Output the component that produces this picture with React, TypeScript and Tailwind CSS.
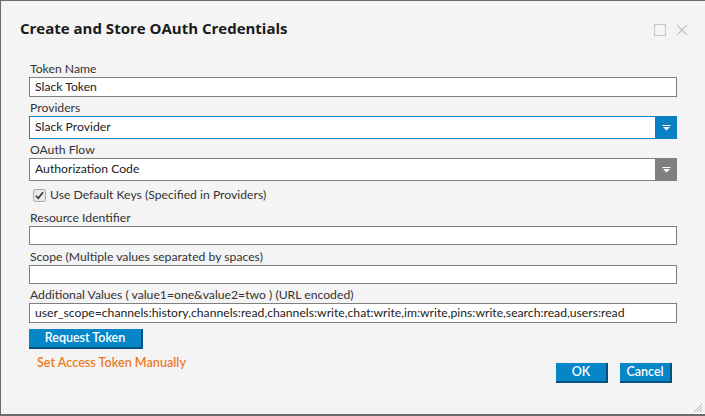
import React from 'react';

const font = { fontFamily: 'Lato, "Open Sans", sans-serif' };

const Caret = () => (
  <svg width="9" height="6" viewBox="0 0 9 6">
    <rect x="0.5" y="0" width="8" height="1" fill="#fff" />
    <polygon points="1,2 8,2 4.5,5.5" fill="#fff" />
  </svg>
);

const Field = ({ label, value, top, h = 20 }: { label: string; value?: string; top: string; h?: number }) => (
  <div className={top}>
    <div className="text-[12.2px] leading-[16px] text-[#333] pl-px">{label}</div>
    <div
      className="bg-white border border-[#808080] flex items-center px-[5px] text-[12.2px] text-[#222] whitespace-nowrap"
      style={{ height: h }}
    >
      {value}
    </div>
  </div>
);

const Select = ({ label, value, blue, top }: { label: string; value: string; blue?: boolean; top: string }) => (
  <div className={top}>
    <div className="text-[12.2px] leading-[16px] text-[#333] pl-px">{label}</div>
    <div className={`h-[23px] flex bg-white border ${blue ? 'border-[#0a84c9]' : 'border-[#808080]'}`}>
      <div className="flex-1 flex items-center px-[5px] text-[12.2px] text-[#222]">{value}</div>
      <div className={`w-[22px] -my-px -mr-px flex items-center justify-center ${blue ? 'bg-[#0a80c4]' : 'bg-[#808080]'}`}>
        <Caret />
      </div>
    </div>
  </div>
);

const Btn = ({ children, w }: { children: React.ReactNode; w: string }) => (
  <div
    className={`${w} h-[20px] flex items-center justify-center bg-[#0586c8] border-r-2 border-b-2 border-[#00527d] text-white text-[12.5px] font-semibold`}
  >
    {children}
  </div>
);

export default function App() {
  return (
    <div
      className="w-[705px] h-[416px] bg-[#f4f4f4] border-t border-l border-b-2 border-[#6b6b6b] relative overflow-hidden"
      style={font}
    >
      {/* Title bar */}
      <div className="flex items-center justify-between pl-[19px] pr-[17px] pt-[17px]">
        <h1
          className="text-[15px] leading-[20px] font-bold text-[#1a1a1a]"
          style={{ fontFamily: '"Open Sans", sans-serif' }}
        >
          Create and Store OAuth Credentials
        </h1>
        <div className="flex items-center gap-[10px] mt-[4px]">
          <svg width="12" height="12" viewBox="0 0 12 12">
            <rect x="0.5" y="0.5" width="11" height="11" fill="none" stroke="#c6c6c6" />
          </svg>
          <svg width="12" height="12" viewBox="0 0 12 12">
            <path d="M1 1 L11 11 M11 1 L1 11" stroke="#c6c6c6" strokeWidth="1.2" />
          </svg>
        </div>
      </div>

      {/* Form */}
      <div className="ml-[28px] w-[648px]">
        <Field label="Token Name" value="Slack Token" top="mt-[23px]" />
        <Select label="Providers" value="Slack Provider" blue top="mt-[3px]" />
        <Select label="OAuth Flow" value="Authorization Code" top="mt-[3px]" />

        <div className="flex items-center gap-[4px] mt-[6px] ml-[4px] h-[16px]">
          <svg width="13" height="13" viewBox="0 0 13 13">
            <rect x="0.5" y="0.5" width="12" height="12" rx="2" fill="#e8e8e8" stroke="#a8a8a8" />
            <path d="M3 6.8 L5.3 9.3 L10 3.2" fill="none" stroke="#333" strokeWidth="1.6" />
          </svg>
          <span className="text-[12.2px] text-[#333]">Use Default Keys (Specified in Providers)</span>
        </div>

        <Field label="Resource Identifier" top="mt-[7px]" h={19} />
        <Field label="Scope (Multiple values separated by spaces)" top="mt-[4px]" h={19} />
        <Field
          label="Additional Values ( value1=one&value2=two ) (URL encoded)"
          value="user_scope=channels:history,channels:read,channels:write,chat:write,im:write,pins:write,search:read,users:read"
          top="mt-[3px]"
        />

        <div className="flex items-start justify-between mt-[6px]">
          <div>
            <Btn w="w-[114px]">Request Token</Btn>
            <div className="ml-[8px] mt-[6px] text-[12.6px] leading-[16px] font-semibold text-[#ec7a23]">
              Set Access Token Manually
            </div>
          </div>
          <div className="flex gap-[12px] mt-[34px] mr-[5px]">
            <Btn w="w-[52px]">OK</Btn>
            <Btn w="w-[52px]">Cancel</Btn>
          </div>
        </div>
      </div>

      {/* Resize grip */}
      <svg className="absolute right-[2px] bottom-[1px]" width="10" height="10" viewBox="0 0 10 10">
        <path d="M9 1 L1 9 M9 4 L4 9 M9 7 L7 9" stroke="#b0b0b0" strokeWidth="1" />
      </svg>
    </div>
  );
}
